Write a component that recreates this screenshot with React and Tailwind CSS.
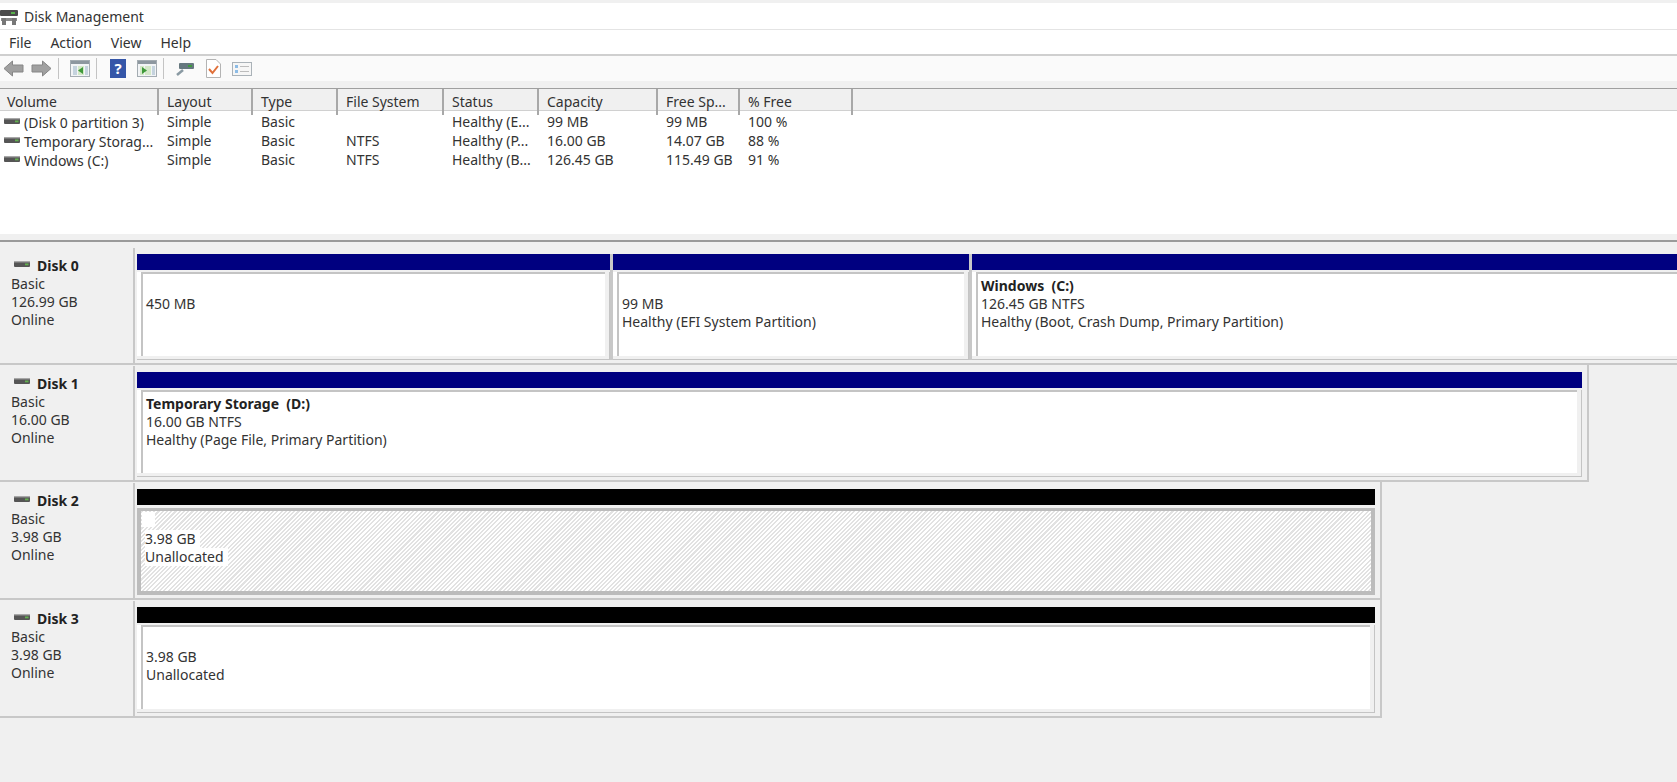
import React from 'react';

const volumes = [
  ['(Disk 0 partition 3)', 'Simple', 'Basic', '', 'Healthy (E...', '99 MB', '99 MB', '100 %'],
  ['Temporary Storag...', 'Simple', 'Basic', 'NTFS', 'Healthy (P...', '16.00 GB', '14.07 GB', '88 %'],
  ['Windows (C:)', 'Simple', 'Basic', 'NTFS', 'Healthy (B...', '126.45 GB', '115.49 GB', '91 %'],
];

const columns = ['Volume', 'Layout', 'Type', 'File System', 'Status', 'Capacity', 'Free Sp...', '% Free'];

const gridCols = 'grid grid-cols-[159px_94px_85px_106px_95px_119px_82px_113px]';

// small drive glyph used in the list and the disk labels
const DriveIcon = ({ className }) => (
  <svg viewBox="0 0 16 6" className={className}>
    <rect x="0" y="0" width="16" height="6" rx="1" fill="#555" />
    <rect x="0" y="0" width="16" height="1.4" fill="#a8a8a8" />
    <rect x="11" y="2.5" width="3.5" height="1.8" fill="#62b04e" />
  </svg>
);

const AppIcon = () => (
  <svg viewBox="0 0 18 16" className="w-[18px] h-4 shrink-0">
    <rect x="0" y="1" width="18" height="6" rx="1" fill="#4a4a4a" />
    <rect x="11" y="3" width="4" height="2" fill="#57b04a" />
    <rect x="1" y="9" width="16" height="3" fill="#8a8a8a" />
    <rect x="2" y="9" width="4" height="7" fill="#777" />
    <rect x="12" y="9" width="4" height="7" fill="#777" />
  </svg>
);

const ArrowIcon = ({ flip }) => (
  <svg viewBox="0 0 21 17" className={flip ? 'w-[21px] h-[17px] -scale-x-100' : 'w-[21px] h-[17px]'}>
    <path d="M1 8.5 L9.5 1 V5 H20 V12 H9.5 V16 Z" fill="#a0a0a0" stroke="#868686" strokeWidth="1" />
  </svg>
);

const PaneIcon = ({ right }) => (
  <svg viewBox="0 0 20 17" className="w-5 h-[17px]">
    <rect x="0.5" y="0.5" width="19" height="16" fill="#f2f4f6" stroke="#a4acb2" />
    <rect x="1" y="1" width="18" height="3" fill="#8d979f" />
    <rect x="3" y="6" width="4" height="9" fill={right ? '#d4e8c8' : '#c5d3de'} />
    <rect x="8" y="6" width="6" height="9" fill="#d4e8c8" />
    <rect x="15" y="6" width="3" height="9" fill="#c5d3de" />
    {right ? (
      <path d="M5 7 L10 10.5 L5 14 Z" fill="#3f9a3a" />
    ) : (
      <path d="M13 7 L8 10.5 L13 14 Z" fill="#3f9a3a" />
    )}
  </svg>
);

const Separator = () => <div className="w-px h-[21px] bg-[#c4c4c4]" />;

const Partition = ({ className, barColor = 'bg-[#000080]', name, lines, hatched }) => (
  <div className={`flex flex-col min-w-0 ${className}`}>
    <div className={`h-[16px] shrink-0 ${barColor}`} />
    {hatched ? (
      <div className="flex-1 mt-[3px] border-[4px] border-t-[3px] border-[#bcbcbc] bg-[repeating-linear-gradient(135deg,#e2e2e2_0px,#e2e2e2_1.5px,#ffffff_1.5px,#ffffff_3px)] flex flex-col items-start pt-[1px] pl-[4px] text-[#333]">
        <span className="bg-white h-[15px] w-[13px] mb-[3px] -ml-[3px]" />
        {lines.map((line) => (
          <span key={line} className="bg-white h-[18px] leading-[18px] pr-1">{line}</span>
        ))}
      </div>
    ) : (
      <div className="flex-1 mt-[2px] flex border-r border-b border-[#c4c4c4]">
        <div className="flex-1 min-w-0 flex bg-white border-r-[4px] border-b-[3px] border-[#f0f0f0]">
          <div className="flex-1 min-w-0 ml-[4px] border-t-2 border-l-2 border-[#c4c4c4] bg-white pt-[3px] pl-[3px] text-[#333]">
            <div className="h-[18px] leading-[18px] font-bold text-[#222] whitespace-pre">{name}</div>
            {lines.map((line) => (
              <div key={line} className="h-[18px] leading-[18px] whitespace-nowrap">{line}</div>
            ))}
          </div>
        </div>
      </div>
    )}
  </div>
);

const DiskRow = ({ disk, type, size, children, cardClass }) => (
  <div className="h-[117.7px] flex shrink-0">
    <div className="w-[135px] shrink-0 mt-px border-r-2 border-b-2 border-[#c8c8c8] pt-[9px] pl-[11px] text-[#333]">
      <div className="h-[18px] flex items-center gap-[7px] pl-[3px] font-bold text-[#222] leading-[18px]">
        <DriveIcon className="w-4 h-[6px] -mt-[5px]" />
        {disk}
      </div>
      <div className="leading-[18px]">{type}</div>
      <div className="leading-[18px]">{size}</div>
      <div className="leading-[18px]">Online</div>
    </div>
    <div className={`flex shrink-0 border-b-2 border-[#c8c8c8] pt-[7px] pl-[2px] pb-[3px] ${cardClass}`}>
      {children}
    </div>
  </div>
);

const App = () => {
  return (
    <div className="h-screen w-full overflow-hidden flex flex-col bg-[#f0f0f0] text-[14px] font-['Noto_Sans','Open_Sans',sans-serif]">
      {/* Title bar */}
      <div className="h-[27px] mt-[3px] shrink-0 bg-white border-b border-[#e4e4e4] flex items-center gap-[6px] pt-px -mb-[3px]">
        <AppIcon />
        <span className="text-[#333]">Disk Management</span>
      </div>

      {/* Menu */}
      <div className="h-[26px] mt-[3px] shrink-0 bg-white border-b-2 border-[#cfcfcf] flex items-center pl-[9px] gap-[19px] text-[#333]">
        <span>File</span>
        <span>Action</span>
        <span>View</span>
        <span>Help</span>
      </div>

      {/* Toolbar */}
      <div className="h-[25px] shrink-0 bg-[#fafafa] flex items-center pl-[3px] mb-[7px]">
        <ArrowIcon />
        <div className="w-[7px]" />
        <ArrowIcon flip />
        <div className="w-[6px]" />
        <Separator />
        <div className="w-[11px]" />
        <PaneIcon />
        <div className="w-[6px]" />
        <Separator />
        <div className="w-[13px]" />
        <div className="w-4 h-[19px] bg-[#3556a8] text-white text-[15px] font-bold leading-[19px] text-center">?</div>
        <div className="w-[11px]" />
        <PaneIcon right />
        <div className="w-[6px]" />
        <Separator />
        <div className="w-[12px]" />
        <svg viewBox="0 0 18 16" className="w-[18px] h-4">
          <rect x="3" y="2" width="15" height="6" rx="1" fill="#66787f" />
          <rect x="12" y="4" width="4" height="2" fill="#3d9b3c" />
          <path d="M7 9 L1 14" stroke="#8a9aa3" strokeWidth="2.5" />
        </svg>
        <div className="w-[12px]" />
        <svg viewBox="0 0 15 19" className="w-[15px] h-[19px]">
          <path d="M0.5 0.5 H10 L14.5 5 V18.5 H0.5 Z" fill="#fff" stroke="#b4b4b4" />
          <path d="M3 10 L6.5 14 L12 7" fill="none" stroke="#e0703a" strokeWidth="2" />
        </svg>
        <div className="w-[11px]" />
        <svg viewBox="0 0 20 14" className="w-5 h-[14px]">
          <rect x="0.5" y="0.5" width="19" height="13" fill="#f6f6f6" stroke="#aab2b8" />
          <rect x="3" y="3" width="3" height="3" fill="#8dbce6" />
          <rect x="3" y="8" width="3" height="3" fill="#8dbce6" />
          <rect x="8" y="4" width="9" height="1" fill="#bcbcbc" />
          <rect x="8" y="9" width="9" height="1" fill="#bcbcbc" />
        </svg>
      </div>

      {/* Volume list */}
      <div className="h-[146px] shrink-0 bg-white border-t border-[#9f9f9f] flex flex-col">
        <div className={`h-[22px] shrink-0 bg-[#f0f0f0] border-b border-[#d0d0d0] text-[#333] ${gridCols}`}>
          {columns.map((col, i) => (
            <div key={col} className={`border-r-2 border-[#a8a8a8] leading-[26px] whitespace-nowrap ${i === 0 ? 'pl-[7px]' : 'pl-2'}`}>
              {col}
            </div>
          ))}
        </div>
        <div className="pt-[2px]">
          {volumes.map((row) => (
            <div key={row[0]} className={`h-[19px] leading-[18px] text-[#333] whitespace-nowrap ${gridCols}`}>
              <div className="flex items-center gap-1 pl-1">
                <DriveIcon className="w-4 h-[6px] -mt-[3px] shrink-0" />
                {row[0]}
              </div>
              {row.slice(1).map((cell, i) => (
                <div key={i} className="pl-2">{cell}</div>
              ))}
            </div>
          ))}
        </div>
      </div>

      {/* Splitter */}
      <div className="h-[8px] shrink-0 border-b-2 border-[#9a9a9a]" />

      {/* Disks */}
      <div className="pt-[5px] flex flex-col">
        <DiskRow disk="Disk 0" type="Basic" size="126.99 GB" cardClass="w-[1700px]">
          <Partition className="w-[473px]" lines={['450 MB']} />
          <div className="w-[3px] bg-[#c8c8c8]" />
          <Partition className="w-[356px]" lines={['99 MB', 'Healthy (EFI System Partition)']} />
          <div className="w-[3px] bg-[#c8c8c8]" />
          <Partition
            className="flex-1"
            name="Windows  (C:)"
            lines={['126.45 GB NTFS', 'Healthy (Boot, Crash Dump, Primary Partition)']}
          />
        </DiskRow>
        <DiskRow disk="Disk 1" type="Basic" size="16.00 GB" cardClass="w-[1454px] border-r-2">
          <Partition
            className="flex-1"
            name="Temporary Storage  (D:)"
            lines={['16.00 GB NTFS', 'Healthy (Page File, Primary Partition)']}
          />
          <div className="w-[5px]" />
        </DiskRow>
        <DiskRow disk="Disk 2" type="Basic" size="3.98 GB" cardClass="w-[1247px] border-r-2">
          <Partition className="flex-1" barColor="bg-black" hatched lines={['3.98 GB', 'Unallocated']} />
          <div className="w-[5px]" />
        </DiskRow>
        <DiskRow disk="Disk 3" type="Basic" size="3.98 GB" cardClass="w-[1247px] border-r-2">
          <Partition className="flex-1" barColor="bg-black" lines={['3.98 GB', 'Unallocated']} />
          <div className="w-[5px]" />
        </DiskRow>
      </div>
    </div>
  );
};

export default App;
